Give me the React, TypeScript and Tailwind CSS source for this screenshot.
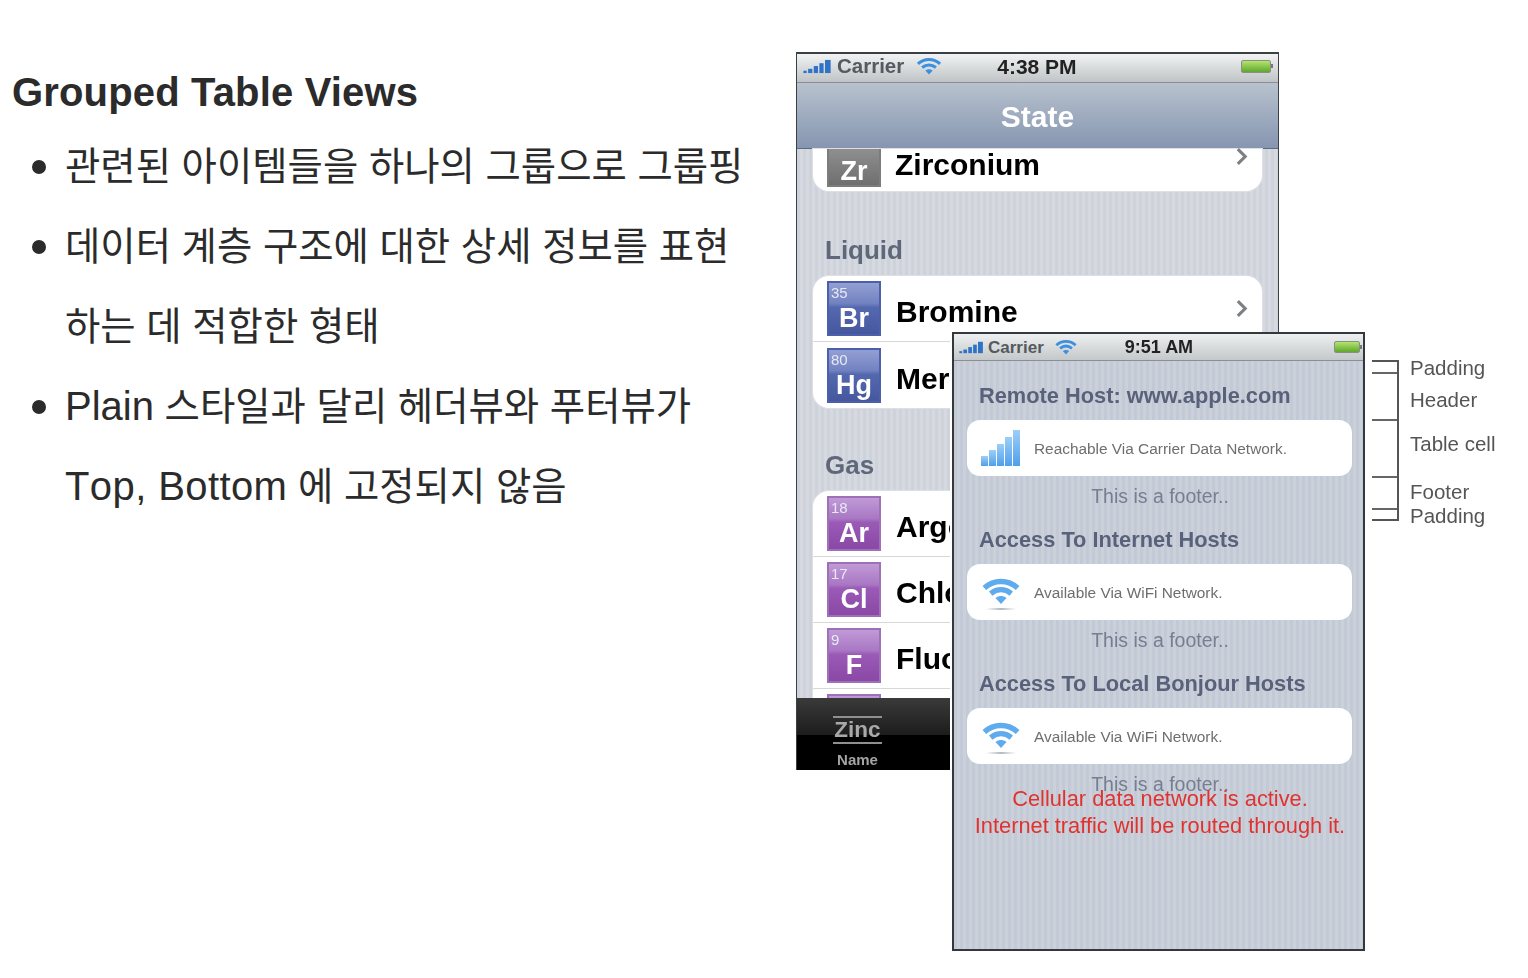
import React from 'react';

const FRONT_STRIPES = 'bg-[repeating-linear-gradient(90deg,#c3cad5_0px,#c3cad5_3px,#cbd1da_3px,#cbd1da_6px)]';
const BACK_STRIPES = 'bg-[repeating-linear-gradient(90deg,#ced2da_0px,#ced2da_3px,#d6d9df_3px,#d6d9df_6px)]';

interface Element {
  num: string;
  sym: string;
  name: string;
  chevron?: boolean;
}

const LIQUID: Element[] = [
  { num: '35', sym: 'Br', name: 'Bromine', chevron: true },
  { num: '80', sym: 'Hg', name: 'Mercury' },
];

const GAS: Element[] = [
  { num: '18', sym: 'Ar', name: 'Argon' },
  { num: '17', sym: 'Cl', name: 'Chlorine' },
  { num: '9', sym: 'F', name: 'Fluorine' },
  { num: '', sym: '', name: '' },
];

function Signal({ className }: { className: string }) {
  return (
    <svg viewBox="0 0 30 16" className={className}>
      <g fill="#2f72c6">
        <rect x="0" y="12.5" width="3.5" height="2.5" />
        <rect x="5" y="10.5" width="4.5" height="4.5" />
        <rect x="11" y="7.5" width="4.5" height="7.5" />
        <rect x="17" y="4.5" width="4.5" height="10.5" />
        <rect x="23" y="1" width="6" height="14" />
      </g>
    </svg>
  );
}

function Wifi({ className, color = '#3d8fe0', width = 3 }: { className: string; color?: string; width?: number }) {
  return (
    <svg viewBox="0 0 24 18" fill="none" className={className}>
      <g stroke={color} strokeWidth={width}>
        <path d="M1.5 6.5C7.5 1 16.5 1 22.5 6.5" />
        <path d="M5.5 10C9.5 6.8 14.5 6.8 18.5 10" />
      </g>
      <path d="M8.5 12.8C11 11.2 13 11.2 15.5 12.8L12 16.5Z" fill={color} />
    </svg>
  );
}

function CellWifi() {
  return (
    <div className="flex h-[36px] w-[40px] flex-col items-center pt-[3px]">
      <Wifi className="h-[30px] w-[38px] shrink-0" color="#5fabef" width={3.4} />
      <div className="mt-[1px] h-[2px] w-[30px] shrink-0 bg-gradient-to-r from-white via-[#b5b8bc] to-white" />
    </div>
  );
}

function Battery({ className }: { className: string }) {
  return (
    <div className={`flex items-center ${className}`}>
      <div className="h-full flex-1 rounded-[2px] border border-[#8a8f86] bg-gradient-to-b from-[#b4e46c] to-[#5fa82c]" />
      <div className="h-1 w-[2px] bg-[#777]" />
    </div>
  );
}

function Chevron() {
  return (
    <svg viewBox="0 0 12 20" fill="none" className="h-[21px] w-[13px]">
      <path d="M2.5 3L9.5 10L2.5 17" stroke="#7c7f84" strokeWidth="3" />
    </svg>
  );
}

function ElementIcon({ num, sym, purple }: { num: string; sym: string; purple?: boolean }) {
  const fill = purple
    ? 'border-[#9d70b8] bg-[linear-gradient(180deg,#c09ad6_0%,#a978c4_40%,#9a5ab6_48%,#8b48a6_100%)]'
    : 'border-[#4c60aa] bg-[linear-gradient(180deg,#939fd4_0%,#7282c0_40%,#5468b0_48%,#46579e_100%)]';
  return (
    <div className={`flex h-[55px] w-[54px] shrink-0 flex-col items-center border-2 text-white ${fill}`}>
      <span className="self-start pl-[2px] text-[15px] leading-[20px] text-[#e6e8f4]">{num}</span>
      <span className="text-[27px] font-bold leading-[30px]">{sym}</span>
    </div>
  );
}

function ElementRow({ item, purple, last }: { item: Element; purple?: boolean; last?: boolean }) {
  return (
    <div className={`flex h-[66px] items-center px-[14px] ${last ? '' : 'border-b border-[#d8d8d8]'}`}>
      <ElementIcon num={item.num} sym={item.sym} purple={purple} />
      <span className="ml-[15px] flex-1 whitespace-nowrap pt-[7px] text-[30px] font-bold leading-none text-black">{item.name}</span>
      {item.chevron && <Chevron />}
    </div>
  );
}

function SectionLabel({ children }: { children: React.ReactNode }) {
  return <div className="pl-[28px] text-[26px] font-bold leading-none text-[#5f687a]">{children}</div>;
}

function BackPhone() {
  return (
    <div className={`absolute left-[796px] top-[52px] flex h-[718px] w-[483px] flex-col overflow-hidden border-x border-t-2 border-[#3c4045] font-['Liberation_Sans',sans-serif] blur-[0.7px] ${BACK_STRIPES}`}>
      <div className="flex h-[29px] shrink-0 items-center border-b border-[#8b8f94] bg-gradient-to-b from-[#f1f3f3] to-[#c0c4c6] pb-[4px] pl-[6px] pr-[5px]">
        <Signal className="h-[15px] w-[29px]" />
        <span className="ml-[5px] text-[20.5px] font-bold leading-none text-[#555a61]">Carrier</span>
        <Wifi className="ml-[12px] h-[19px] w-[26px]" />
        <span className="ml-[55px] text-[21px] font-bold leading-none text-[#222]">4:38 PM</span>
        <div className="flex-1" />
        <Battery className="h-[13px] w-[32px]" />
      </div>
      <div className="flex h-[66px] shrink-0 items-center justify-center border-b border-[#5d6a80] bg-gradient-to-b from-[#b8c2ce] to-[#8696b0] pt-[2px] text-[30px] font-bold text-white">
        State
      </div>
      <div className="flex flex-col px-[16px]">
        <div className="flex h-[42px] items-start rounded-b-[16px] bg-white px-[14px] shadow-[0_0_0_1px_#dcdfe3]">
          <div className="flex h-[38px] w-[54px] shrink-0 items-end justify-center border-2 border-t-0 border-[#7c7c7c] bg-gradient-to-b from-[#8f8f8f] to-[#6f6f6f] font-bold text-white">
            <span className="text-[27px] leading-[28px]">Zr</span>
          </div>
          <span className="ml-[14px] flex-1 text-[30px] font-bold leading-[32px] text-black">Zirconium</span>
          <div className="-mt-[3px]"><Chevron /></div>
        </div>
      </div>
      <div className="mt-[46px]"><SectionLabel>Liquid</SectionLabel></div>
      <div className="mx-[16px] mt-[13px] rounded-[16px] bg-white shadow-[0_0_0_1px_#dcdfe3]">
        {LIQUID.map((item, i) => (
          <ElementRow key={item.sym} item={item} last={i === LIQUID.length - 1} />
        ))}
      </div>
      <div className="mt-[44px]"><SectionLabel>Gas</SectionLabel></div>
      <div className="mx-[16px] mt-[13px] rounded-t-[16px] bg-white shadow-[0_0_0_1px_#dcdfe3]">
        {GAS.map((item) => (
          <ElementRow key={item.num || 'peek'} item={item} purple />
        ))}
      </div>
      <div className="absolute bottom-0 left-0 right-0 flex h-[72px] flex-col items-start bg-[linear-gradient(180deg,#3a3a3a_0%,#1d1d1d_51%,#000_51%,#000_100%)] pl-[36px] pt-[18px]">
        <div className="flex w-[49px] justify-center border-y-2 border-[#8f8f8f] text-[22.5px] font-bold leading-[24px] text-[#a9a9a9]">Zinc</div>
        <div className="mt-[8px] w-[49px] text-center text-[15px] font-bold leading-none text-[#a4a4a4]">Name</div>
      </div>
    </div>
  );
}

function ReachCard({ text, signal }: { text: string; signal?: boolean }) {
  return (
    <div className="ml-[13px] mr-[11px] flex h-[56px] items-center rounded-[13px] bg-white pl-[14px]">
      {signal ? (
        <svg viewBox="0 0 40 36" className="h-[36px] w-[40px]">
          <defs>
            <linearGradient id="bars" x1="0" y1="0" x2="0" y2="1">
              <stop offset="0" stopColor="#9ccff7" />
              <stop offset="1" stopColor="#4f9fec" />
            </linearGradient>
          </defs>
          <g fill="url(#bars)">
            <rect x="0" y="26" width="7" height="10" />
            <rect x="8" y="20" width="7" height="16" />
            <rect x="16" y="14" width="7" height="22" />
            <rect x="24" y="7" width="7" height="29" />
            <rect x="32" y="0" width="7" height="36" />
          </g>
        </svg>
      ) : (
        <CellWifi />
      )}
      <span className="ml-[13px] whitespace-nowrap pt-[1px] text-[15.4px] leading-none text-[#6e6e6e]">{text}</span>
    </div>
  );
}

function Footer() {
  return <div className="h-[20px] pl-[3px] text-center text-[19.5px] leading-[20px] text-[#767e92]">This is a footer..</div>;
}

function FrontHeader({ children }: { children: React.ReactNode }) {
  return <div className="h-[22px] pl-[25px] text-[21.8px] font-bold leading-[20px] text-[#59627a]">{children}</div>;
}

function FrontPhone() {
  return (
    <div className={`absolute left-[952px] top-[332px] flex h-[619px] w-[413px] flex-col border-2 border-[#34383d] font-['Liberation_Sans',sans-serif] shadow-[-2px_0_0_0_#fff] blur-[0.7px] ${FRONT_STRIPES}`}>
      <div className="flex h-[27px] shrink-0 items-center border-b border-[#8b8f94] bg-gradient-to-b from-[#eef0f0] to-[#c4c8ca] pl-[5px] pr-[1px]">
        <Signal className="h-[13px] w-[25px]" />
        <span className="ml-[4px] text-[17px] font-bold leading-none text-[#555a61]">Carrier</span>
        <Wifi className="ml-[11px] h-[17px] w-[22px]" />
        <span className="ml-[48px] text-[18px] font-bold leading-none text-[#222]">9:51 AM</span>
        <div className="flex-1" />
        <Battery className="h-[12px] w-[28px]" />
      </div>
      <div className="mt-[25px]"><FrontHeader>Remote Host: www.apple.com</FrontHeader></div>
      <div className="mt-[12px]"><ReachCard signal text="Reachable Via Carrier Data Network." /></div>
      <div className="mt-[10px]"><Footer /></div>
      <div className="mt-[24px]"><FrontHeader>Access To Internet Hosts</FrontHeader></div>
      <div className="mt-[12px]"><ReachCard text="Available Via WiFi Network." /></div>
      <div className="mt-[10px]"><Footer /></div>
      <div className="mt-[24px]"><FrontHeader>Access To Local Bonjour Hosts</FrontHeader></div>
      <div className="mt-[12px]"><ReachCard text="Available Via WiFi Network." /></div>
      <div className="mt-[10px]"><Footer /></div>
      <div className="-mt-[9px] pl-[3px] text-center text-[21.8px] leading-[27px] text-[#e0322f]">
        <div>Cellular data network is active.</div>
        <div>Internet traffic will be routed through it.</div>
      </div>
    </div>
  );
}

function Annotations() {
  return (
    <div className="absolute left-[1372px] top-[360px] font-['Liberation_Sans',sans-serif] blur-[0.5px]">
      <div className="relative h-[161px] w-[27px] border-y-2 border-r-2 border-[#555]">
        <div className="absolute left-0 top-[10px] h-[2px] w-full bg-[#666]" />
        <div className="absolute left-0 top-[57px] h-[2px] w-full bg-[#666]" />
        <div className="absolute left-0 top-[114px] h-[2px] w-full bg-[#666]" />
        <div className="absolute bottom-[9px] left-0 h-[2px] w-full bg-[#666]" />
      </div>
      <div className="absolute left-[38px] top-[-2px] w-[110px] text-[20.5px] leading-none text-[#555]">
        <div>Padding</div>
        <div className="mt-[11px]">Header</div>
        <div className="mt-[24px]">Table cell</div>
        <div className="mt-[27px]">Footer</div>
        <div className="mt-[4px]">Padding</div>
      </div>
    </div>
  );
}

const BULLETS: React.ReactNode[][] = [
  ['관련된 아이템들을 하나의 그룹으로 그룹핑'],
  ['데이터 계층 구조에 대한 상세 정보를 표현', '하는 데 적합한 형태'],
  [
    <><span className="text-[40px]">Plain</span> 스타일과 달리 헤더뷰와 푸터뷰가</>,
    <><span className="text-[40px] tracking-[0.4px] [font-kerning:none]">Top, Bottom</span> 에 고정되지 않음</>,
  ],
];

export default function App() {
  return (
    <div className="relative h-[978px] w-[1528px] overflow-hidden bg-white font-['Liberation_Sans','Noto_Sans_CJK_KR',sans-serif] text-[#2b2b2b]">
      <div className="pl-[12px] pt-[68px]">
        <h1 className="text-[40px] font-bold leading-[48px] tracking-[0.16px]">Grouped Table Views</h1>
        <ul className="mt-[11px] pl-[53px]">
          {BULLETS.map((lines, i) => (
            <li key={i} className="relative text-[38.4px] leading-[80px]">
              <span className="absolute left-[-33px] top-[33px] h-[14px] w-[14px] rounded-full bg-[#2b2b2b]" />
              {lines.map((line, j) => (
                <div key={j} className={i === 2 ? 'h-[80px] -translate-y-px whitespace-nowrap' : 'h-[80px] whitespace-nowrap'}>{line}</div>
              ))}
            </li>
          ))}
        </ul>
      </div>
      <BackPhone />
      <FrontPhone />
      <Annotations />
    </div>
  );
}
